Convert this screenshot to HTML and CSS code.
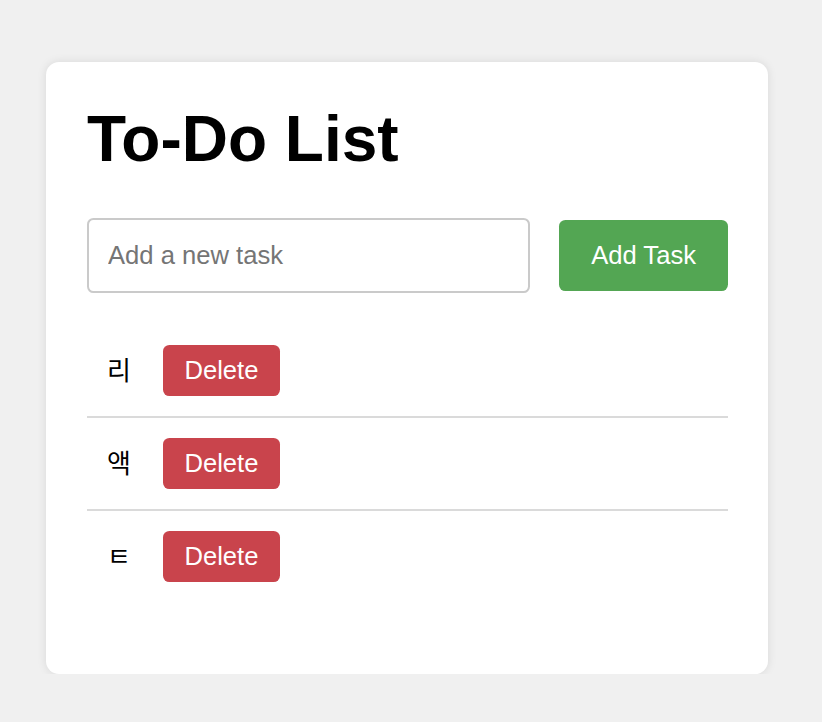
FILE: index.html
```html
<!DOCTYPE html>
<html lang="en">
<head>
<meta charset="utf-8">
<title>To-Do List</title>
<link rel="stylesheet" href="styles.css">
</head>
<body>
<div class="card">
  <h1 class="title">To-Do List</h1>
  <div class="add-row">
    <input class="task-input" type="text" placeholder="Add a new task">
    <button class="add-btn">Add Task</button>
  </div>
  <ul class="task-list">
    <li class="task"><span class="task-text">리</span><button class="delete-btn">Delete</button></li>
    <li class="task"><span class="task-text">액</span><button class="delete-btn">Delete</button></li>
    <li class="task"><span class="task-text">ㅌ</span><button class="delete-btn">Delete</button></li>
  </ul>
</div>
</body>
</html>
```

FILE: styles.css
```css
html, body {
  margin: 0;
  padding: 0;
}
body {
  background: #f0f0f0;
  font-family: "Liberation Sans", Arial, "Noto Sans CJK KR", sans-serif;
  color: #000;
}
.card {
  box-sizing: border-box;
  width: 722px;
  margin: 62px 0 0 46px;
  padding: 40px 40px 40px 41px;
  background: #fff;
  border-radius: 13px;
  box-shadow: 0 0 10px rgba(0, 0, 0, 0.1);
}
.title {
  margin: 0 0 42px;
  font-size: 64px;
  font-weight: bold;
  line-height: normal;
}
.add-row {
  display: flex;
  align-items: center;
  gap: 29px;
}
.task-input {
  flex: 1;
  min-width: 0;
  box-sizing: border-box;
  height: 75px;
  padding: 0 19px;
  font-family: "Liberation Sans", Arial, sans-serif;
  font-size: 25.6px;
  border: 2px solid #cacaca;
  border-radius: 6.4px;
  outline: none;
  color: #000;
}
.task-input::placeholder {
  color: #757575;
}
.add-btn {
  box-sizing: border-box;
  height: 71px;
  padding: 0 32px;
  font-family: "Liberation Sans", Arial, sans-serif;
  font-size: 25.6px;
  color: #fff;
  background: #53a653;
  border: none;
  border-radius: 6.4px;
}
.task-list {
  list-style: none;
  margin: 32px 0 32px;
  padding: 0;
}
.task {
  display: flex;
  align-items: center;
  padding: 20px;
  border-bottom: 2px solid #dadada;
}
.task:last-child {
  border-bottom: none;
}
.task-text {
  font-family: "Noto Sans CJK KR", "Liberation Sans", sans-serif;
  font-size: 26px;
  font-weight: 400;
  margin-right: 32px;
  position: relative;
  top: -2px;
}
.delete-btn {
  box-sizing: border-box;
  height: 51px;
  padding: 0 21.5px;
  font-family: "Liberation Sans", Arial, sans-serif;
  font-size: 25.6px;
  color: #fff;
  background: #c9444c;
  border: none;
  border-radius: 6.4px;
}
```
